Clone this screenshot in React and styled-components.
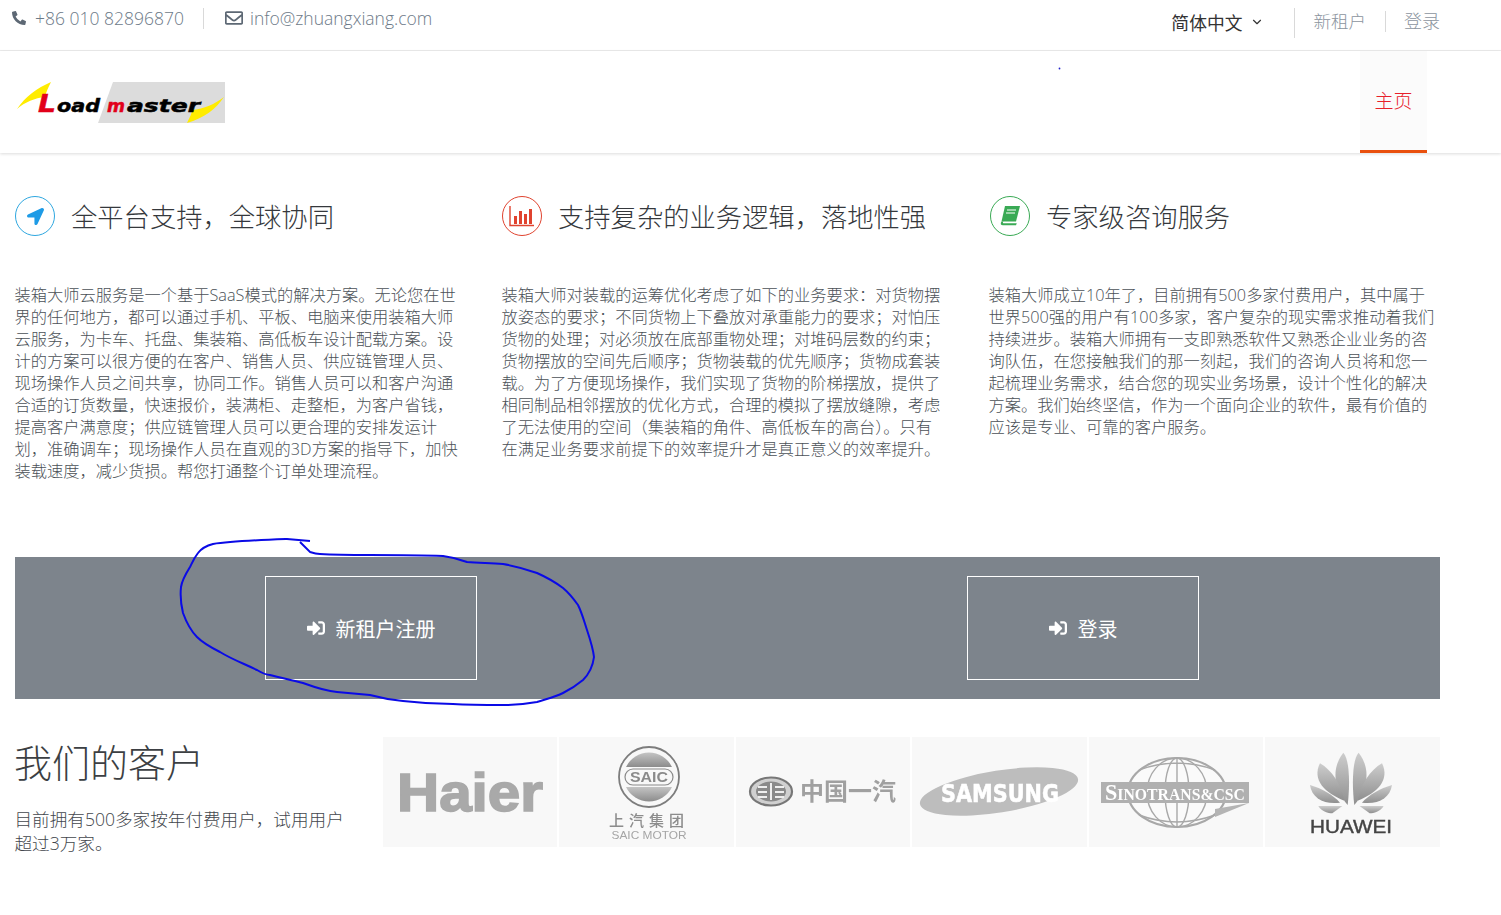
import React from "react";
import styled, { createGlobalStyle } from "styled-components";
import { FaPhoneAlt, FaRegEnvelope, FaLocationArrow, FaSignInAlt } from "react-icons/fa";
import { FiChevronDown } from "react-icons/fi";

const GlobalStyle = createGlobalStyle`
  html, body {
    margin: 0;
    padding: 0;
    background: #fff;
    font-family: "Open Sans", "Noto Sans CJK SC", sans-serif;
    font-weight: 300;
  }
  * { box-sizing: border-box; }
`;

const Page = styled.div`
  position: relative;
  width: 1501px;
  height: 915px;
  overflow: hidden;
`;

const TopBar = styled.div`
  display: flex;
  justify-content: space-between;
  height: 51px;
  border-bottom: 1px solid #ececec;
  padding: 8px 61px 0 12px;
`;

const TopGroup = styled.div`
  display: flex;
  align-items: flex-start;
`;

const Contact = styled.span`
  display: flex;
  align-items: center;
  gap: ${(p) => p.$gap}px;
  height: 21px;
  margin-top: -1px;
  font-size: 17.5px;
  color: #6d7a88;
  white-space: nowrap;
  svg { color: #5d6874; }
`;

const TopDivider = styled.i`
  display: block;
  width: 1px;
  height: ${(p) => p.$h}px;
  background: #d9d9d9;
  margin: ${(p) => p.$top}px ${(p) => p.$right}px 0 ${(p) => p.$left}px;
`;

const LangPicker = styled.span`
  display: flex;
  align-items: center;
  gap: 7px;
  height: 28px;
  font-size: 17.8px;
  font-weight: 400;
  color: #333;
`;

const TopLink = styled.span`
  font-size: ${(p) => p.$size}px;
  line-height: 28px;
  margin-top: -1px;
  color: #8b949e;
`;

const NavBar = styled.div`
  display: flex;
  justify-content: space-between;
  height: 102px;
  padding: 0 74px 0 15px;
  box-shadow: 0 1px 3px rgba(0, 0, 0, 0.14);
`;

const LogoBox = styled.div`
  display: flex;
  align-items: center;
`;

const NavItem = styled.div`
  display: flex;
  align-items: center;
  justify-content: center;
  width: 67px;
  height: 102px;
  padding-bottom: 1px;
  background: #fbfbfb;
  border-bottom: 3px solid #e9500e;
  color: #e8202a;
  font-size: 19px;
`;

const Features = styled.section`
  display: grid;
  grid-template-columns: repeat(3, 487px);
  padding: 43px 0 0 15px;
`;

const Feature = styled.article`
  width: 460px;
`;

const FeatureHead = styled.div`
  display: flex;
  align-items: center;
  gap: 16px;
  height: 40px;
  margin-bottom: 48px;
  padding-left: ${(p) => p.$inset}px;
`;

const IconRing = styled.span`
  display: flex;
  align-items: center;
  justify-content: center;
  width: 40px;
  height: 40px;
  flex: none;
  border: 1px solid ${(p) => p.$color};
  border-radius: 50%;
  color: ${(p) => p.$color};
`;

const FeatureTitle = styled.h3`
  margin: 0;
  padding-bottom: 2px;
  font-size: 26.3px;
  font-weight: 300;
  color: #35383c;
  white-space: nowrap;
`;

const FeatureBody = styled.p`
  margin: 0 0 0 -0.5px;
  height: 198px;
  font-size: 16.25px;
  line-height: 22px;
  color: #4b5157;
  white-space: nowrap;
`;

const Banner = styled.section`
  display: grid;
  grid-template-columns: 712px 712px;
  align-items: center;
  justify-items: center;
  width: 1425px;
  height: 142px;
  margin: 75px 0 0 15px;
  background: #7d848c;
`;

const BannerButton = styled.a`
  display: flex;
  align-items: center;
  justify-content: center;
  gap: 11px;
  width: ${(p) => p.$width}px;
  height: 104px;
  border: 1px solid #fff;
  color: #fff;
  font-size: 20px;
  font-weight: 400;
`;

const Clients = styled.section`
  display: flex;
  width: 1425px;
  height: 110px;
  margin: 38px 0 0 15px;
`;

const ClientIntro = styled.div`
  width: 368px;
  flex: none;
`;

const ClientTitle = styled.h2`
  margin: 0 0 0 -1px;
  height: 51px;
  font-size: 38px;
  line-height: 51px;
  font-weight: 300;
  color: #3c3f43;
  white-space: nowrap;
`;

const ClientText = styled.p`
  margin: 19px 0 0 -0.5px;
  font-size: 17.6px;
  line-height: 24px;
  color: #43474d;
  white-space: nowrap;
`;

const LogoGrid = styled.div`
  display: grid;
  grid-template-columns: repeat(6, 174.3px);
  column-gap: 2.2px;
`;

const LogoCell = styled.div`
  height: 110px;
  background: #f8f8f8;
  overflow: hidden;
  svg { display: block; filter: blur(0.35px); }
`;

const Annotation = styled.svg`
  position: absolute;
  left: 0;
  top: 0;
  pointer-events: none;
`;

const features = [
  {
    color: "#2ea7e0",
    inset: 0,
    title: "全平台支持，全球协同",
    icon: <FaLocationArrow size={17} color="#1e9be6" />,
    lines: [
      "装箱大师云服务是一个基于SaaS模式的解决方案。无论您在世",
      "界的任何地方，都可以通过手机、平板、电脑来使用装箱大师",
      "云服务，为卡车、托盘、集装箱、高低板车设计配载方案。设",
      "计的方案可以很方便的在客户、销售人员、供应链管理人员、",
      "现场操作人员之间共享，协同工作。销售人员可以和客户沟通",
      "合适的订货数量，快速报价，装满柜、走整柜，为客户省钱，",
      "提高客户满意度；供应链管理人员可以更合理的安排发运计",
      "划，准确调车；现场操作人员在直观的3D方案的指导下，加快",
      "装载速度，减少货损。帮您打通整个订单处理流程。",
    ],
  },
  {
    color: "#e0432f",
    inset: 0,
    title: "支持复杂的业务逻辑，落地性强",
    icon: (
      <svg width="26" height="22" viewBox="0 0 26 22">
        <path d="M1 1v19.5h24" fill="none" stroke="#e0432f" strokeWidth="1.4" />
        <path d="M5 11h3v8H5zM10 6h3v13h-3zM15 9h3v10h-3zM20 4h3v15h-3z" fill="#e0432f" />
      </svg>
    ),
    lines: [
      "装箱大师对装载的运筹优化考虑了如下的业务要求：对货物摆",
      "放姿态的要求；不同货物上下叠放对承重能力的要求；对怕压",
      "货物的处理；对必须放在底部重物处理；对堆码层数的约束；",
      "货物摆放的空间先后顺序；货物装载的优先顺序；货物成套装",
      "载。为了方便现场操作，我们实现了货物的阶梯摆放，提供了",
      "相同制品相邻摆放的优化方式，合理的模拟了摆放缝隙，考虑",
      "了无法使用的空间（集装箱的角件、高低板车的高台）。只有",
      "在满足业务要求前提下的效率提升才是真正意义的效率提升。",
    ],
  },
  {
    color: "#3aaa55",
    inset: 1,
    title: "专家级咨询服务",
    icon: (
      <svg width="22" height="22" viewBox="0 0 22 22">
        <path d="M6 1h15l-4 15.5H2.5z" fill="#3aaa55" />
        <path d="M2.5 16.5c-1.4 2 -.8 3.8 1.5 3.8h13l.8-2H5c-1.2 0-1.4-.9-.6-1.8z" fill="#3aaa55" />
        <path d="M8 5h9M7 8h9" stroke="#fff" strokeWidth="1.1" />
      </svg>
    ),
    lines: [
      "装箱大师成立10年了，目前拥有500多家付费用户，其中属于",
      "世界500强的用户有100多家，客户复杂的现实需求推动着我们",
      "持续进步。装箱大师拥有一支即熟悉软件又熟悉企业业务的咨",
      "询队伍，在您接触我们的那一刻起，我们的咨询人员将和您一",
      "起梳理业务需求，结合您的现实业务场景，设计个性化的解决",
      "方案。我们始终坚信，作为一个面向企业的软件，最有价值的",
      "应该是专业、可靠的客户服务。",
    ],
  },
];

function LoadmasterLogo() {
  const wordmark = {
    fontFamily: "DejaVu Sans",
    fontWeight: 700,
    fontStyle: "italic",
    fontSize: 18,
    lengthAdjust: "spacingAndGlyphs",
    strokeWidth: 0.5,
  };
  return (
    <svg width="210" height="41" viewBox="0 0 210 41">
      <path d="M98 0h112v41H83z" fill="#dcdcdc" />
      <path d="M2 27C10 15 22 6 36 0c-3 6-5 10-6 15C20 16 10 20 2 27z" fill="#ffec00" />
      <path d="M172 41c3-6 5-10 5-13 12-1 23-6 32-13-8 12-20 21-37 26z" fill="#ffec00" />
      <text {...wordmark} x="23" y="30" fontSize="25" textLength="18" fill="#e2001a" stroke="#e2001a">L</text>
      <text {...wordmark} x="42" y="30" textLength="43" fill="#000" stroke="#000">oad</text>
      <text {...wordmark} x="92" y="30" textLength="18" fill="#e2001a" stroke="#e2001a">m</text>
      <text {...wordmark} x="112" y="30" textLength="73" fill="#000" stroke="#000">aster</text>
    </svg>
  );
}

function HaierLogo() {
  return (
    <svg width="174" height="110" viewBox="0 0 174 110">
      <text x="14" y="74" fontFamily="Liberation Sans" fontWeight="700" fontSize="53" textLength="146" lengthAdjust="spacingAndGlyphs" fill="#a9a9a9" stroke="#a9a9a9" strokeWidth="1.6">Haier</text>
    </svg>
  );
}

function SaicLogo() {
  return (
    <svg width="174" height="110" viewBox="0 0 174 110">
      <defs>
        <linearGradient id="saicDome" x1="0" y1="0" x2="0" y2="1">
          <stop offset="0" stopColor="#c4c4c4" />
          <stop offset="1" stopColor="#8c8c8c" />
        </linearGradient>
      </defs>
      <circle cx="90" cy="40" r="30" fill="#f8f8f8" stroke="#7d7d7d" strokeWidth="1.8" />
      <path d="M67 30a25.5 25.5 0 0 1 46 0z" fill="url(#saicDome)" />
      <path d="M67 50a25.5 25.5 0 0 0 46 0z" fill="url(#saicDome)" />
      <rect x="66" y="32" width="48" height="16" rx="8" fill="#f8f8f8" stroke="#8a8a8a" strokeWidth="1.2" />
      <text x="90" y="45" textAnchor="middle" fontFamily="Liberation Sans" fontWeight="700" fontSize="14" textLength="38" lengthAdjust="spacingAndGlyphs" fill="#8a8a8a">SAIC</text>
      <text x="90" y="89" textAnchor="middle" fontFamily="Noto Sans CJK SC" fontWeight="500" fontSize="15" letterSpacing="5" fill="#8c8c8c">上汽集团</text>
      <text x="90" y="102" textAnchor="middle" fontFamily="Liberation Sans" fontSize="11" textLength="75" lengthAdjust="spacingAndGlyphs" fill="#a5a5a5">SAIC MOTOR</text>
    </svg>
  );
}

function FawLogo() {
  return (
    <svg width="174" height="110" viewBox="0 0 174 110">
      <ellipse cx="35" cy="54.5" rx="21" ry="14" fill="#d0d0d0" stroke="#777" strokeWidth="2.2" />
      <ellipse cx="35" cy="54.5" rx="15" ry="10" fill="#8a8a8a" />
      <path d="M22 50h9M39 50h9M22 55h9M39 55h9M22 60h9M39 60h9M35 46v17" stroke="#eee" strokeWidth="2" />
      <text x="64" y="63" fontFamily="Noto Sans CJK SC" fontWeight="700" fontSize="24" fill="#a0a0a0">中国一汽</text>
    </svg>
  );
}

function SamsungLogo() {
  return (
    <svg width="174" height="110" viewBox="0 0 174 110">
      <ellipse cx="87" cy="54.5" rx="80" ry="21" transform="rotate(-9 87 54.5)" fill="#bdbdbd" />
      <text x="88" y="65" textAnchor="middle" fontFamily="DejaVu Sans" fontWeight="700" fontSize="25" textLength="118" lengthAdjust="spacingAndGlyphs" fill="#fff" stroke="#fff" strokeWidth="0.6">SAMSUNG</text>
    </svg>
  );
}

function SinotransLogo() {
  return (
    <svg width="174" height="110" viewBox="0 0 174 110">
      <g fill="none" stroke="#a8a8a8" strokeWidth="1.4">
        <ellipse cx="88" cy="55.5" rx="49" ry="34.5" fill="#fafafa" strokeWidth="2.2" />
        <ellipse cx="88" cy="55.5" rx="30" ry="34.5" />
        <ellipse cx="88" cy="55.5" rx="12" ry="34.5" />
        <path d="M88 21v69M50 33q38-14 76 0M50 78q38 14 76 0" />
      </g>
      <path d="M126 72l34-6-34 14z" fill="#b4b4b4" />
      <rect x="12" y="45" width="148" height="21" fill="#b0b0b0" />
      <text x="16" y="63" fontFamily="Liberation Serif" fontWeight="700" fontSize="17" textLength="140" lengthAdjust="spacingAndGlyphs" fill="#fff">
        <tspan fontSize="24">S</tspan>INOTRANS&amp;CSC
      </text>
    </svg>
  );
}

function HuaweiLogo() {
  const side = (
    <>
      <path d="M788 225C750 180 735 120 775 68C795 90 795 170 788 225z" />
      <path d="M778 212C720 190 680 150 705 100C740 120 770 165 778 212z" />
      <path d="M765 218C720 225 680 205 675 165C710 175 745 195 765 218z" />
      <path d="M772 228H700C710 245 730 250 742 250z" />
    </>
  );
  return (
    <svg width="174" height="110" viewBox="0 0 174 110">
      <defs>
        <linearGradient id="petal" x1="0" y1="0" x2="0" y2="1">
          <stop offset="0" stopColor="#cdcdcd" />
          <stop offset="1" stopColor="#8f8f8f" />
        </linearGradient>
      </defs>
      <g transform="translate(-180 -7) scale(0.3333)" fill="url(#petal)">
        {side}
        <g transform="translate(1596 0) scale(-1 1)">{side}</g>
      </g>
      <text x="86" y="96" textAnchor="middle" fontFamily="Liberation Sans" fontSize="18" textLength="82" lengthAdjust="spacingAndGlyphs" stroke="#444" strokeWidth="0.4" fill="#444">HUAWEI</text>
    </svg>
  );
}

const SCRIBBLE =
  "M310 541 L287 539 C260 540 232 541 213 544 C205 546 201 549 198 553 C194 558 192 563 190 567 C185 575 182 580 181 587 C180 597 181 605 183 613 C187 624 191 631 197 637 C204 644 212 648 220 652 C233 660 245 664 257 670 C262 673 266 675 270 675 C281 678 292 680 303 683 C314 687 325 691 337 692 C348 693 359 694 370 695 C381 698 392 700 403 701 C420 703 436 704 453 704 C470 705 486 705 503 705 C515 705 526 704 537 702 C546 699 555 697 563 693 C571 689 577 685 583 680 C590 673 593 665 594 657 C593 648 590 639 587 630 C584 621 582 613 578 605 C573 598 569 593 563 588 C555 582 546 577 537 573 C526 569 515 566 503 564 C490 563 479 563 467 562 C459 559 451 557 443 556 C419 555 394 555 370 555 C353 555 337 555 320 554 C316 554 313 553 310 552 L300 542";

export default function App() {
  return (
    <Page>
      <GlobalStyle />
      <TopBar>
        <TopGroup>
          <Contact $gap={9}>
            <FaPhoneAlt size={14} />
            +86 010 82896870
          </Contact>
          <TopDivider $h={21} $top={0} $left={19} $right={21} />
          <Contact $gap={7}>
            <FaRegEnvelope size={18} />
            info@zhuangxiang.com
          </Contact>
        </TopGroup>
        <TopGroup>
          <LangPicker>
            简体中文
            <FiChevronDown size={14} />
          </LangPicker>
          <TopDivider $h={30} $top={0} $left={30} $right={19} />
          <TopLink $size={17.5}>新租户</TopLink>
          <TopDivider $h={21} $top={3} $left={19} $right={18} />
          <TopLink $size={18}>登录</TopLink>
        </TopGroup>
      </TopBar>

      <NavBar>
        <LogoBox>
          <LoadmasterLogo />
        </LogoBox>
        <NavItem>主页</NavItem>
      </NavBar>

      <Features>
        {features.map((f) => (
          <Feature key={f.title}>
            <FeatureHead $inset={f.inset}>
              <IconRing $color={f.color}>{f.icon}</IconRing>
              <FeatureTitle>{f.title}</FeatureTitle>
            </FeatureHead>
            <FeatureBody>
              {f.lines.map((line) => (
                <React.Fragment key={line}>
                  {line}
                  <br />
                </React.Fragment>
              ))}
            </FeatureBody>
          </Feature>
        ))}
      </Features>

      <Banner>
        <BannerButton $width={212}>
          <FaSignInAlt size={18} />
          新租户注册
        </BannerButton>
        <BannerButton $width={232}>
          <FaSignInAlt size={18} />
          登录
        </BannerButton>
      </Banner>

      <Clients>
        <ClientIntro>
          <ClientTitle>我们的客户</ClientTitle>
          <ClientText>
            目前拥有500多家按年付费用户，试用用户
            <br />
            超过3万家。
          </ClientText>
        </ClientIntro>
        <LogoGrid>
          <LogoCell><HaierLogo /></LogoCell>
          <LogoCell><SaicLogo /></LogoCell>
          <LogoCell><FawLogo /></LogoCell>
          <LogoCell><SamsungLogo /></LogoCell>
          <LogoCell><SinotransLogo /></LogoCell>
          <LogoCell><HuaweiLogo /></LogoCell>
        </LogoGrid>
      </Clients>

      <Annotation width="1501" height="915" viewBox="0 0 1501 915">
        <path d={SCRIBBLE} fill="none" stroke="#0a0ae6" strokeWidth="2" />
        <circle cx="1059.5" cy="68.5" r="0.9" fill="#2222cc" />
      </Annotation>
    </Page>
  );
}
